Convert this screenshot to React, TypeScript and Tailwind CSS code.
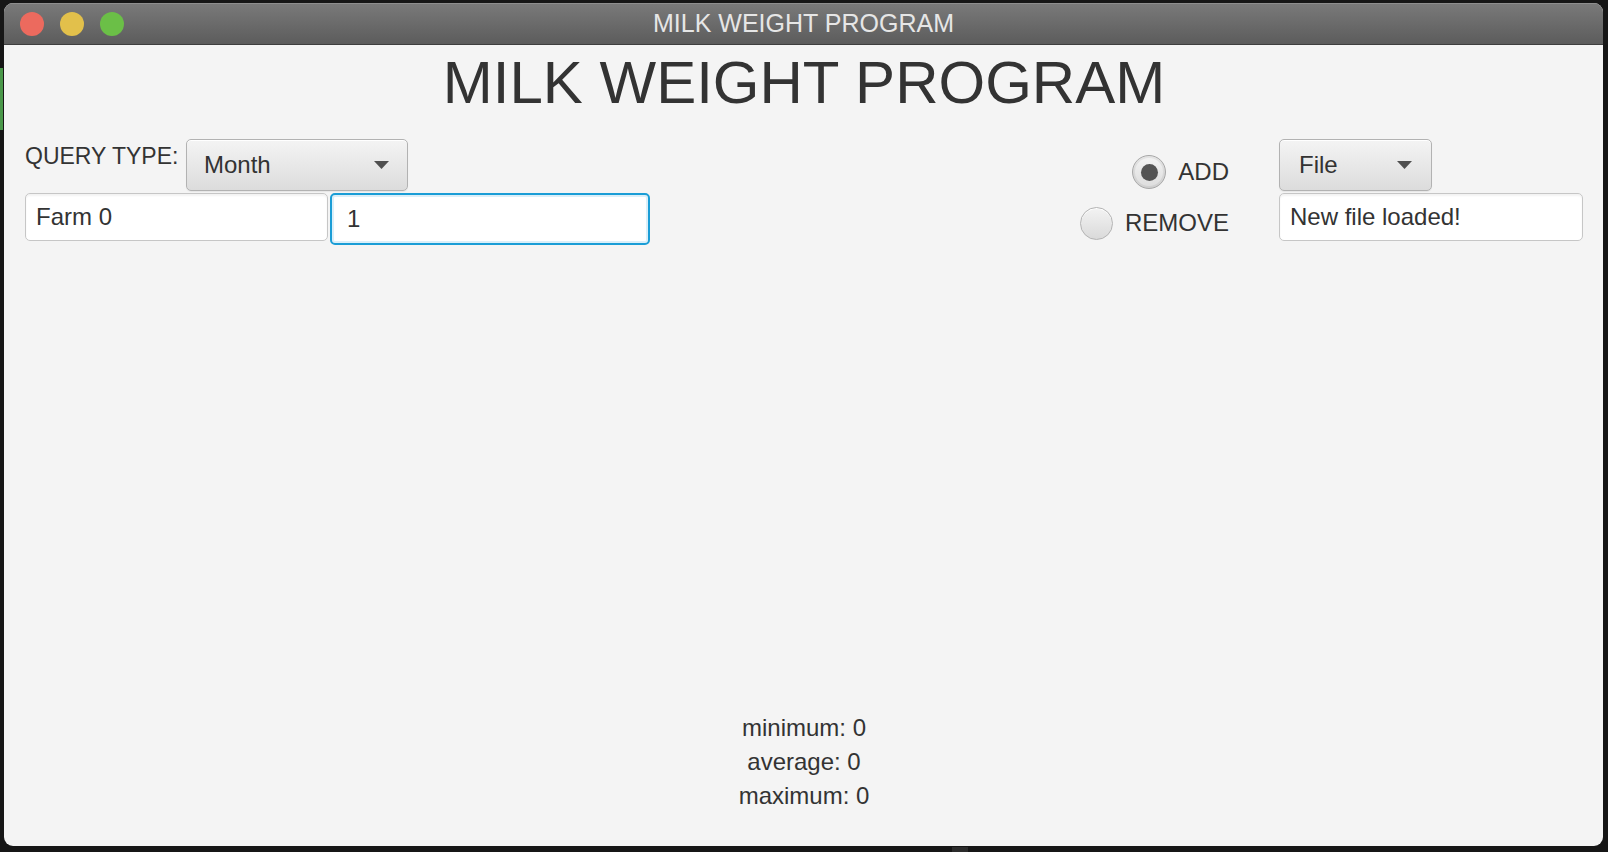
const fontStack = "font-['Liberation_Sans',Arial,sans-serif]";

function Arrow() {
  return (
    <svg width="15" height="8" viewBox="0 0 15 8">
      <path d="M0 0h15L7.5 8z" fill="#4f4f4f" />
    </svg>
  );
}

type ComboProps = {
  label: string;
  width: string;
  pad: string;
};

function Combo({ label, width, pad }: ComboProps) {
  return (
    <div
      className={`flex h-[52px] ${width} ${pad} shrink-0 items-center justify-between rounded-[5px] border border-[#b2b2b2] bg-gradient-to-b from-[#f4f4f4] to-[#dcdcdc] shadow-[inset_0_1px_0_#ffffff,0_1px_1px_rgba(0,0,0,0.06)]`}>
      <span className="text-[24px] leading-none text-[#333333]">{label}</span>
      <Arrow />
    </div>
  );
}

function Radio({ label, checked }: { label: string; checked?: boolean }) {
  return (
    <div className="flex h-[34px] items-center gap-[12px]">
      {checked ? (
        <div className="flex h-[34px] w-[34px] items-center justify-center rounded-full border border-[#a8a8a8] bg-gradient-to-b from-[#e4e4e4] to-[#cfcfcf]">
          <div className="flex h-[28px] w-[28px] items-center justify-center rounded-full bg-gradient-to-b from-[#f2f2f2] to-[#dedede]">
            <div className="h-[17px] w-[17px] rounded-full bg-[#545454]" />
          </div>
        </div>
      ) : (
        <div className="h-[33px] w-[33px] rounded-full border border-[#b3b3b3] bg-gradient-to-b from-[#f3f3f3] to-[#dadada] shadow-[inset_0_1px_0_#ffffff]" />
      )}
      <span className="text-[24px] leading-none text-[#333333]">{label}</span>
    </div>
  );
}

export default function App() {
  return (
    <div
      className={`relative h-[852px] w-[1608px] overflow-hidden bg-[#161616] pb-[6px] pl-[4px] pr-[5px] pt-[3px] ${fontStack}`}>
      <div className="absolute left-0 top-[68px] h-[62px] w-[3px] bg-[#4a984a]" />
      <div className="absolute bottom-0 left-[952px] h-[5px] w-[16px] bg-[#2c2c2c]" />

      <div className="flex h-full flex-col overflow-hidden rounded-[9px] bg-[#f4f4f4]">
        {/* title bar */}
        <div className="grid h-[42px] shrink-0 grid-cols-[1fr_auto_1fr] items-center border-b border-[#3e3e3e] bg-gradient-to-b from-[#7a7a7a] to-[#5c5c5c] shadow-[inset_0_1px_0_#8e8e8e]">
          <div className="flex items-center gap-[16px] pl-[16px]">
            <div className="h-[24px] w-[24px] rounded-full bg-[#ec6a5e]" />
            <div className="h-[24px] w-[24px] rounded-full bg-[#e2c04b]" />
            <div className="h-[24px] w-[24px] rounded-full bg-[#6bbf47]" />
          </div>
          <div className="text-[25px] leading-none text-[#e6e6e6]">MILK WEIGHT PROGRAM</div>
          <div />
        </div>

        {/* content */}
        <div className="flex flex-1 flex-col pl-[21px] pr-[20px]">
          <h1 className="mt-[8px] text-center text-[60px] leading-none font-normal text-[#333333]">
            MILK WEIGHT PROGRAM
          </h1>

          <div className="mt-[26px] flex items-start justify-between">
            {/* query controls */}
            <div className="flex flex-col gap-[2px]">
              <div className="flex items-start">
                <span className="mt-[3px] w-[161px] text-[23px] leading-[28px] text-[#333333]">
                  QUERY TYPE:
                </span>
                <Combo label="Month" width="w-[222px]" pad="pl-[17px] pr-[18px]" />
              </div>
              <div className="flex items-start gap-[2px]">
                <div className="flex h-[48px] w-[303px] items-center rounded-[5px] border border-[#c6c6c6] bg-white px-[10px] text-[24px] leading-none text-[#333333] shadow-[inset_0_2px_2px_rgba(0,0,0,0.05)]">
                  Farm 0
                </div>
                <div className="flex h-[52px] w-[320px] items-center rounded-[5px] border-2 border-[#1a9dd6] bg-white pl-[15px] pr-[10px] text-[24px] leading-none text-[#333333] shadow-[inset_0_0_0_2px_#dbeff9]">
                  1
                </div>
              </div>
            </div>

            {/* file controls */}
            <div className="flex items-start gap-[50px]">
              <div className="mt-[16px] flex flex-col items-end gap-[17px]">
                <Radio label="ADD" checked />
                <Radio label="REMOVE" />
              </div>
              <div className="flex w-[304px] flex-col gap-[2px]">
                <Combo label="File" width="w-[153px]" pad="pl-[19px] pr-[19px]" />
                <div className="flex h-[48px] w-full items-center rounded-[5px] border border-[#c6c6c6] bg-white px-[10px] text-[24px] leading-none text-[#333333] shadow-[inset_0_2px_2px_rgba(0,0,0,0.05)]">
                  New file loaded!
                </div>
              </div>
            </div>
          </div>

          <div className="mt-auto mb-[33px] flex flex-col items-center text-[24px] leading-[34px] text-[#333333]">
            <span>minimum: 0</span>
            <span>average: 0</span>
            <span>maximum: 0</span>
          </div>
        </div>
      </div>
    </div>
  );
}
